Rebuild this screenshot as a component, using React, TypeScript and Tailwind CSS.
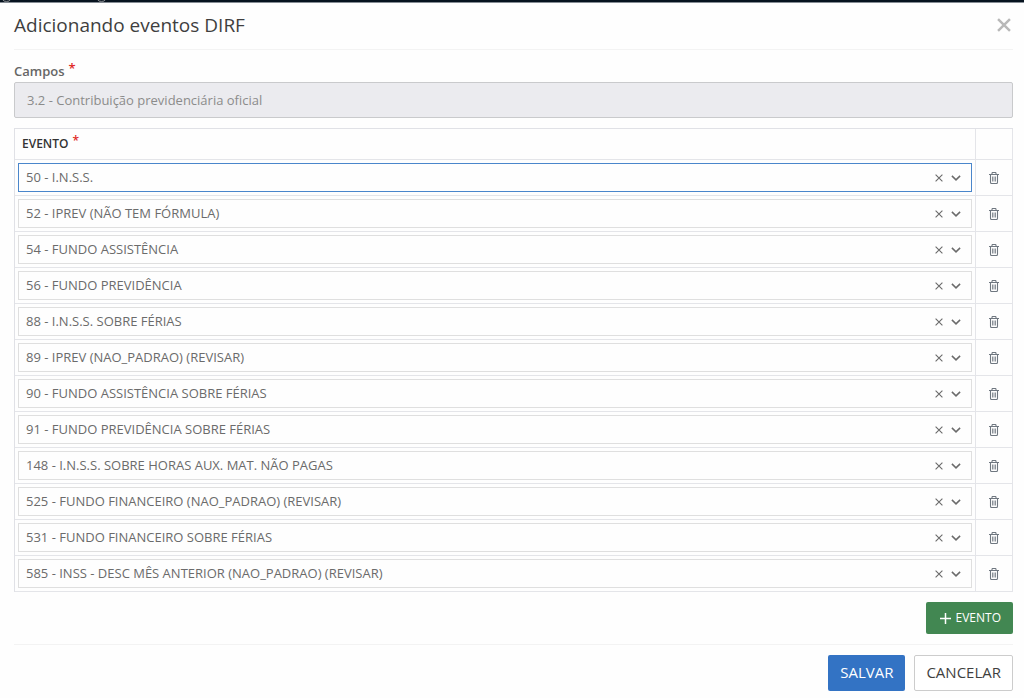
import { useState } from "react";

const INITIAL_EVENTS = [
  "50 - I.N.S.S.",
  "52 - IPREV (NÃO TEM FÓRMULA)",
  "54 - FUNDO ASSISTÊNCIA",
  "56 - FUNDO PREVIDÊNCIA",
  "88 - I.N.S.S. SOBRE FÉRIAS",
  "89 - IPREV (NAO_PADRAO) (REVISAR)",
  "90 - FUNDO ASSISTÊNCIA SOBRE FÉRIAS",
  "91 - FUNDO PREVIDÊNCIA SOBRE FÉRIAS",
  "148 - I.N.S.S. SOBRE HORAS AUX. MAT. NÃO PAGAS",
  "525 - FUNDO FINANCEIRO (NAO_PADRAO) (REVISAR)",
  "531 - FUNDO FINANCEIRO SOBRE FÉRIAS",
  "585 - INSS - DESC MÊS ANTERIOR (NAO_PADRAO) (REVISAR)",
];

function CrossIcon({ className }: { className: string }) {
  return (
    <svg viewBox="0 0 8 8" className={className} fill="none" stroke="currentColor" aria-hidden="true">
      <path d="M.6.6l6.8 6.8M7.4.6L.6 7.4" />
    </svg>
  );
}

function ChevronIcon() {
  return (
    <svg viewBox="0 0 10 6" className="pointer-events-none h-1.5 w-2.5 shrink-0 text-[#6b6b6b]" fill="none" stroke="currentColor" strokeWidth="1.5" aria-hidden="true">
      <path d="M.9.9L5 4.9 9.1.9" />
    </svg>
  );
}

function TrashIcon() {
  return (
    <svg viewBox="0 0 10 12" className="h-3 w-2.5" fill="none" stroke="currentColor" aria-hidden="true">
      <path d="M0 2.5h10M3 2.3V1.2Q3 .5 3.7.5h2.6Q7 .5 7 1.2v1.1M1.5 2.7v7.6q0 1.2 1 1.2h5q1 0 1-1.2V2.7" strokeWidth="1.1" />
      <path d="M3.5 4.5v5M5 4.5v5M6.5 4.5v5" strokeWidth=".8" />
    </svg>
  );
}

function Required() {
  return <span className="ml-1 align-[3px] leading-none text-[#e02b27]">*</span>;
}

function EventRow({ value, active, onClear, onRemove }: { value: string; active: boolean; onClear: () => void; onRemove: () => void }) {
  return (
    <tr>
      <td className="border-r border-b border-[#e4e5e9] p-[3px]">
        <div className={`flex h-[29px] items-center border pr-[10px] ${active ? "border-[#4a86cb]" : "border-[#dfdfdf]"}`}>
          <select aria-label="Evento" defaultValue={value} key={value} className="h-full min-w-0 flex-1 appearance-none bg-transparent px-[7px] text-[13px] text-[#6b6b6b] outline-none">
            <option>{value}</option>
          </select>
          <button type="button" aria-label="Limpar" onClick={onClear} className="mr-2 shrink-0 text-[#6b6b6b]">
            <CrossIcon className="size-2 stroke-[1.1]" />
          </button>
          <ChevronIcon />
        </div>
      </td>
      <td className="border-r border-b border-[#e4e5e9]">
        <button type="button" aria-label="Excluir evento" onClick={onRemove} className="mx-auto block text-[#6f7780]">
          <TrashIcon />
        </button>
      </td>
    </tr>
  );
}

export default function App() {
  const [events, setEvents] = useState(INITIAL_EVENTS);

  return (
    <div className="font-['Open_Sans',sans-serif] text-[13px] text-[#3f3f3f]">
      <div className="h-[3px] border-b border-[#858c94] bg-[#07131f]">
        <svg viewBox="0 0 120 2" className="block h-0.5 w-[120px]" fill="none" stroke="#8b8f93" aria-hidden="true">
          <path d="M3 0q0 1.4 3.5 1.4T10 0M98 0q0 1.4 3.5 1.4T105 0" />
        </svg>
      </div>
      <main className="bg-[#fefefe] pr-[11px] pb-[7px] pl-[14px]">
        <header className="flex h-[47px] items-center justify-between border-b border-[#f3f3f3] pb-0.5">
          <h1 className="text-[19px] leading-6">Adicionando eventos DIRF</h1>
          <button type="button" aria-label="Fechar" className="mr-0.5 text-[#b8b8b8]">
            <CrossIcon className="size-3.5 stroke-[1.4]" />
          </button>
        </header>

        <label htmlFor="campos" className="mt-[11px] mb-px block h-5 text-[13px] leading-5 font-semibold text-[#666]">
          Campos
          <Required />
        </label>
        <input
          id="campos"
          disabled
          value="3.2 - Contribuição previdenciária oficial"
          className="block h-9 w-full rounded-xs border border-[#c9cacc] bg-[#ebebef] px-3 text-[13px] text-[#8b8b8b]"
        />

        <table className="mt-[10px] w-full table-fixed border-separate border-spacing-0 border-t border-l border-[#e0e1e6]">
          <thead>
            <tr className="h-[31px]">
              <th scope="col" className="border-r border-b border-[#e4e5e9] px-[7px] text-left text-[12px] leading-5 font-semibold text-[#333]">
                EVENTO
                <Required />
              </th>
              <td className="w-[37px] border-r border-b border-[#e4e5e9]" />
            </tr>
          </thead>
          <tbody>
            {events.map((event, index) => (
              <EventRow
                key={index}
                value={event}
                active={index === 0}
                onClear={() => setEvents(events.map((item, i) => (i === index ? "" : item)))}
                onRemove={() => setEvents(events.filter((_, i) => i !== index))}
              />
            ))}
          </tbody>
        </table>

        <div className="flex justify-end border-b border-[#f3f3f3] py-[10px]">
          <button type="button" onClick={() => setEvents([...events, ""])} className="flex h-8 items-center gap-[5px] rounded-xs bg-[#428752] pr-3 pl-3.5 text-[12px] text-white">
            <svg viewBox="0 0 11 11" className="size-[11px]" stroke="currentColor" strokeWidth="1.5" aria-hidden="true">
              <path d="M5.5 0v11M0 5.5h11" />
            </svg>
            EVENTO
          </button>
        </div>

        <footer className="flex justify-end gap-[9px] pt-[10px]">
          <button type="submit" className="h-9 rounded-xs bg-[#3373c4] px-3 pb-0.5 text-[15px] text-white">SALVAR</button>
          <button type="button" className="h-9 rounded-xs border border-[#ccc] bg-white px-[11px] pb-0.5 text-[15px]">CANCELAR</button>
        </footer>
      </main>
    </div>
  );
}
